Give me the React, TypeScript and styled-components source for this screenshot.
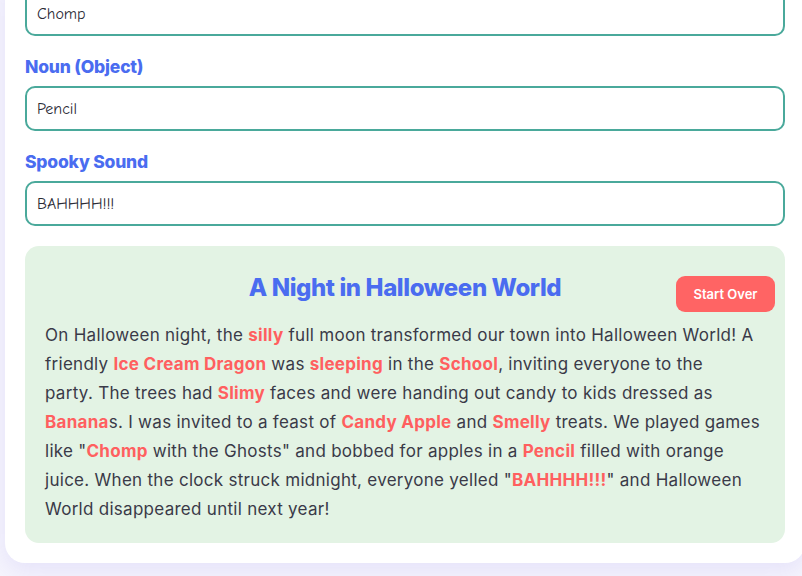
import React from 'react';
import styled, { createGlobalStyle } from 'styled-components';

const GlobalStyle = createGlobalStyle`
  html, body {
    margin: 0;
    padding: 0;
    background: #f6f5fd;
    overflow: hidden;
  }
  body {
    font-family: Inter, 'Open Sans', sans-serif;
  }
`;

const Page = styled.div`
  width: 802px;
  height: 576px;
  overflow: hidden;
  padding-left: 5px;
  box-sizing: border-box;
`;

const Card = styled.div`
  width: 800px;
  margin-top: -29px;
  padding: 20px;
  box-sizing: border-box;
  background: #ffffff;
  border-radius: 20px;
  box-shadow: 0 8px 24px rgba(110, 90, 220, 0.12);
  display: flex;
  flex-direction: column;
  gap: 20px;
`;

const Field = styled.div`
  display: flex;
  flex-direction: column;
`;

const Label = styled.label`
  font-family: Inter, sans-serif;
  font-weight: 800;
  font-size: 17.5px;
  line-height: 21px;
  letter-spacing: -0.2px;
  color: #4a6cf0;
  margin-bottom: 9px;
`;

const Input = styled.input`
  height: 45px;
  box-sizing: border-box;
  border: 2px solid #4aa99b;
  border-radius: 10px;
  padding: 0 10px;
  font-family: 'Comic Sans MS', 'Comic Neue', 'DejaVu Sans', sans-serif;
  font-size: 16px;
  color: #2b2b36;
  background: #fff;
  outline: none;
`;

const StoryBox = styled.div`
  position: relative;
  background: #e3f3e4;
  border-radius: 14px;
  padding: 20px 20px 19px;
`;

const StoryTitle = styled.h2`
  margin: 0 0 12px;
  text-align: center;
  font-family: Inter, sans-serif;
  font-weight: 800;
  font-size: 24px;
  line-height: 43px;
  letter-spacing: -0.4px;
  color: #4a6cf0;
`;

const ResetButton = styled.button`
  position: absolute;
  top: 30px;
  right: 10px;
  width: 99px;
  height: 36px;
  border: none;
  border-radius: 9px;
  background: #ff6464;
  color: #ffffff;
  font-family: Inter, sans-serif;
  font-weight: 600;
  font-size: 13px;
  cursor: pointer;
`;

const StoryText = styled.p`
  margin: 0;
  font-family: Inter, sans-serif;
  font-size: 17px;
  letter-spacing: 0.28px;
  line-height: 29px;
  white-space: nowrap;
  color: #3a3a48;
`;

const Word = styled.span`
  color: #ff5f5f;
  font-weight: 700;
`;

const fields = [
  { label: 'Verb', value: 'Chomp' },
  { label: 'Noun (Object)', value: 'Pencil' },
  { label: 'Spooky Sound', value: 'BAHHHH!!!' },
];

export default function App() {
  return (
    <>
      <GlobalStyle />
      <Page>
        <Card>
          {fields.map((f, i) => (
            <Field key={f.label}>
              {i > 0 && <Label>{f.label}</Label>}
              <Input defaultValue={f.value} />
            </Field>
          ))}
          <StoryBox>
            <StoryTitle>A Night in Halloween World</StoryTitle>
            <ResetButton>Start Over</ResetButton>
            <StoryText>
              On Halloween night, the <Word>silly</Word> full moon transformed our town into Halloween World! A
              <br />
              friendly <Word>Ice Cream Dragon</Word> was <Word>sleeping</Word> in the <Word>School</Word>, inviting
              everyone to the
              <br />
              party. The trees had <Word>Slimy</Word> faces and were handing out candy to kids dressed as
              <br />
              <Word>Banana</Word>s. I was invited to a feast of <Word>Candy Apple</Word> and <Word>Smelly</Word>{' '}
              treats. We played games
              <br />
              like "<Word>Chomp</Word> with the Ghosts" and bobbed for apples in a <Word>Pencil</Word> filled with
              orange
              <br />
              juice. When the clock struck midnight, everyone yelled "<Word>BAHHHH!!!</Word>" and Halloween
              <br />
              World disappeared until next year!
            </StoryText>
          </StoryBox>
        </Card>
      </Page>
    </>
  );
}
